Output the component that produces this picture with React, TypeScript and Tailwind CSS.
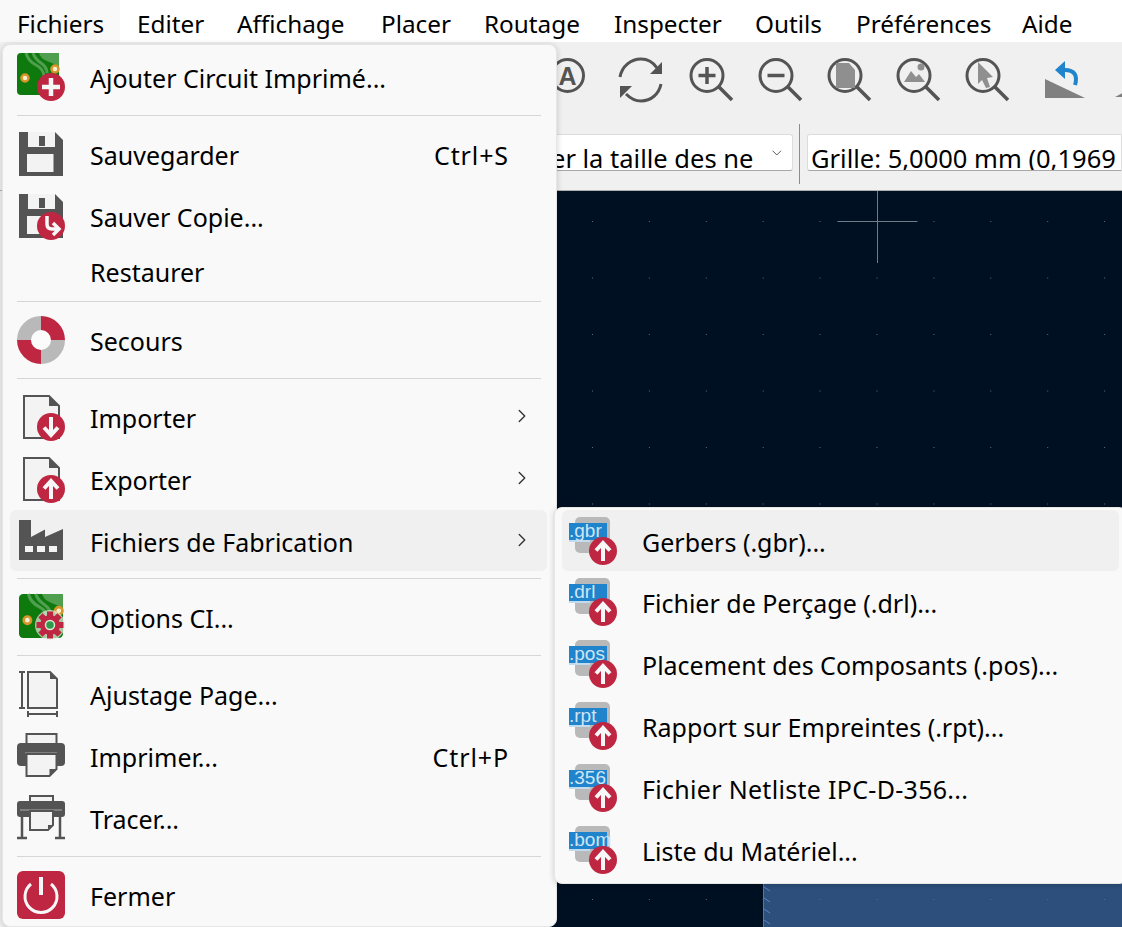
import { ChevronDown, ChevronRight } from 'lucide-react'
import type { ReactNode } from 'react'

const DARK = '#545454'
const RED = '#bf2641'
const PAPER = '#f3f3f3'

function Icon({ children }: { children: ReactNode }) {
  return (
    <svg viewBox="0 0 48 48" className="w-12 h-12 shrink-0">
      {children}
    </svg>
  )
}

function Badge({ kind }: { kind: 'plus' | 'up' | 'down' | 'copy' }) {
  return (
    <g>
      <circle cx="34" cy="34" r="14" fill={RED} />
      {kind === 'plus' && <path d="M25 34h18M34 25v18" stroke="#f7f7f7" strokeWidth="4.5" fill="none" />}
      {kind === 'up' && <path d="M34 44V27M27 33.500L34 26l7 7.500" stroke="#f7f7f7" strokeWidth="4" fill="none" />}
      {kind === 'down' && <path d="M34 24v17M27 34.500L34 42l7-7.500" stroke="#f7f7f7" strokeWidth="4" fill="none" />}
      {kind === 'copy' && <path d="M30 24v8q0 5 5 5h6M36 31l6 6-6 6" stroke="#f7f7f7" strokeWidth="3.500" fill="none" />}
    </g>
  )
}

function PcbBase({ x, y, s }: { x: number; y: number; s: number }) {
  const k = s / 42
  return (
    <g transform={`translate(${x} ${y}) scale(${k})`}>
      <rect width="42" height="42" rx="4" fill="#0e7a0e" />
      <path d="M22 0q1 5 8 8t12 5v-13z" fill="#4f9f4f" />
      <path d="M9 0q2 8 10 12t8 12v18M16 0q2 6 8 10t6 10" stroke="#4f9f4f" strokeWidth="3" fill="none" />
      <path d="M34 20q3 6 3 22" stroke="#4f9f4f" strokeWidth="3" fill="none" />
      <circle cx="8" cy="25" r="3.500" fill="#f4f0d0" stroke="#d9952b" strokeWidth="2.500" />
      <circle cx="38" cy="16" r="3.500" fill="#f4f0d0" stroke="#d9952b" strokeWidth="2.500" />
    </g>
  )
}

function Floppy() {
  return (
    <g>
      <path d="M2 2h36l8 8v36H2z" fill={DARK} />
      <path d="M11 2h27v15H11z" fill={PAPER} />
      <path d="M22 6h6v10h-6z" fill={DARK} />
      <path d="M10 24h26.500v18H10z" fill={PAPER} />
    </g>
  )
}

function DocFile({ kind }: { kind: 'up' | 'down' }) {
  return (
    <Icon>
      <path d="M7 3h25l10 10v32H7z" fill={PAPER} stroke={DARK} strokeWidth="2" />
      <path d="M32 3l10 10H32z" fill={DARK} />
      <Badge kind={kind} />
    </Icon>
  )
}

function GearBadge() {
  const angles = [0, 45, 90, 135, 180, 225, 270, 315]
  return (
    <g>
      <circle cx="33" cy="32" r="15" fill="#e6ece0" opacity="0.7" />
      {angles.map((a) => (
        <rect key={a} x="30" y="18.500" width="6" height="6" fill={RED} transform={`rotate(${a} 33 32)`} />
      ))}
      <circle cx="33" cy="32" r="10" fill={RED} />
      <circle cx="33" cy="32" r="4.500" fill="#2f9a4a" stroke="#dfe8d8" strokeWidth="1.500" />
    </g>
  )
}

const icons: Record<string, ReactNode> = {
  addBoard: (
    <Icon>
      <PcbBase x={0} y={0} s={42} />
      <Badge kind="plus" />
    </Icon>
  ),
  save: (
    <Icon>
      <Floppy />
    </Icon>
  ),
  saveCopy: (
    <Icon>
      <Floppy />
      <Badge kind="copy" />
    </Icon>
  ),
  rescue: (
    <Icon>
      <path d="M24 24V0A24 24 0 0 0 0 24z" fill="#b9b9b9" />
      <path d="M24 24V0a24 24 0 0 1 24 24z" fill={RED} />
      <path d="M24 24v24A24 24 0 0 1 0 24z" fill={RED} />
      <path d="M24 24v24a24 24 0 0 0 24-24z" fill="#b9b9b9" />
      <circle cx="24" cy="24" r="10" fill="#fbfbfb" />
    </Icon>
  ),
  importFile: <DocFile kind="down" />,
  exportFile: <DocFile kind="up" />,
  factory: (
    <Icon>
      <path d="M2 3h12v17l14-7.500V20l18-8v31H2z" fill={DARK} />
      <path d="M8 29h8v6H8zM20 29h8v6h-8zM32 29h8v6h-8z" fill={PAPER} />
    </Icon>
  ),
  boardOptions: (
    <Icon>
      <PcbBase x={2} y={1} s={44} />
      <GearBadge />
    </Icon>
  ),
  pageSetup: (
    <Icon>
      <path d="M11 2h22l7 7v29H11z" fill={PAPER} stroke={DARK} strokeWidth="2" />
      <path d="M33 2l7 7h-7z" fill={DARK} />
      <path d="M5 2v36M2 2h6M2 38h6M11 44h29M11 41v6M40 41v6" stroke={DARK} strokeWidth="2" fill="none" />
    </Icon>
  ),
  print: (
    <Icon>
      <path d="M9.500 2h30v12h-30z" fill={PAPER} stroke={DARK} strokeWidth="2" />
      <rect x="0" y="11" width="48" height="23" rx="4" fill={DARK} />
      <path d="M8 21h32" stroke="#8e8e8e" strokeWidth="1.500" />
      <path d="M9.500 22h30v15l-7 7h-23z" fill={PAPER} stroke={DARK} strokeWidth="2" />
      <path d="M39.500 37l-7 7v-7z" fill={DARK} />
    </Icon>
  ),
  plot: (
    <Icon>
      <path d="M13 2h23v8H13z" fill={PAPER} stroke={DARK} strokeWidth="2" />
      <path d="M5 20v23M43 20v23M0 44h10M38 44h10" stroke={DARK} strokeWidth="2.500" fill="none" />
      <rect x="0" y="7" width="48" height="16" rx="3" fill={DARK} />
      <path d="M3 16h42" stroke="#8e8e8e" strokeWidth="1.500" />
      <path d="M13 17h23v14l-5 5H13z" fill={PAPER} stroke={DARK} strokeWidth="2" />
      <path d="M36 31l-5 5v-5z" fill={DARK} />
    </Icon>
  ),
  quit: (
    <Icon>
      <rect width="48" height="48" rx="6" fill={RED} />
      <path d="M14 13a16 16 0 1 0 20 0" stroke="#f7f7f7" strokeWidth="3" fill="none" />
      <path d="M24 6v18" stroke="#f7f7f7" strokeWidth="4" />
    </Icon>
  ),
}

type MenuRow =
  | { sep: true }
  | { label: string; icon?: string; shortcut?: string; arrow?: boolean; active?: boolean; short?: boolean }

const mainRows: MenuRow[] = [
  { icon: 'addBoard', label: 'Ajouter Circuit Imprimé...' },
  { sep: true },
  { icon: 'save', label: 'Sauvegarder', shortcut: 'Ctrl+S' },
  { icon: 'saveCopy', label: 'Sauver Copie...' },
  { label: 'Restaurer', short: true },
  { sep: true },
  { icon: 'rescue', label: 'Secours' },
  { sep: true },
  { icon: 'importFile', label: 'Importer', arrow: true },
  { icon: 'exportFile', label: 'Exporter', arrow: true },
  { icon: 'factory', label: 'Fichiers de Fabrication', arrow: true, active: true },
  { sep: true },
  { icon: 'boardOptions', label: 'Options CI...' },
  { sep: true },
  { icon: 'pageSetup', label: 'Ajustage Page...' },
  { icon: 'print', label: 'Imprimer...', shortcut: 'Ctrl+P' },
  { icon: 'plot', label: 'Tracer...' },
  { sep: true },
  { icon: 'quit', label: 'Fermer' },
]

const fabRows = [
  { ext: '.gbr', label: 'Gerbers (.gbr)...', active: true },
  { ext: '.drl', label: 'Fichier de Perçage (.drl)...' },
  { ext: '.pos', label: 'Placement des Composants (.pos)...' },
  { ext: '.rpt', label: 'Rapport sur Empreintes (.rpt)...' },
  { ext: '.356', label: 'Fichier Netliste IPC-D-356...', wide: true },
  { ext: '.bom', label: 'Liste du Matériel...' },
]

const menuBar = [
  { label: 'Fichiers', w: 'w-[120px] bg-[#f9f9f9]' },
  { label: 'Editer', w: 'w-[100px]' },
  { label: 'Affichage', w: 'w-[144px]' },
  { label: 'Placer', w: 'w-[103px]' },
  { label: 'Routage', w: 'w-[130px]' },
  { label: 'Inspecter', w: 'w-[141px]' },
  { label: 'Outils', w: 'w-[101px]' },
  { label: 'Préférences', w: 'w-[166px]' },
  { label: 'Aide', w: 'w-[100px]' },
]

function FabIcon({ ext }: { ext: string }) {
  return (
    <Icon>
      <rect x="6" y="0" width="35" height="36" rx="5" fill="#b9b9b9" />
      <path d="M0 6h38v17H0z" fill="#1f84cb" />
      <path d="M0 23h21v2H0z" fill="#c3dbee" />
      <text x="0" y="20" fontSize="19" fill="#cfe4f4" fontFamily="'Liberation Sans', sans-serif">
        {ext}
      </text>
      <Badge kind="up" />
    </Icon>
  )
}

function Magnifier({ children }: { children: ReactNode }) {
  return (
    <svg viewBox="0 0 48 48" className="w-12 h-12 shrink-0">
      <circle cx="19" cy="19.500" r="16" fill="none" stroke={DARK} strokeWidth="3" />
      <path d="M31 31l13 13" stroke={DARK} strokeWidth="3.500" />
      {children}
    </svg>
  )
}

function Toolbar() {
  return (
    <div className="flex items-center h-[76px] pl-[549px]">
      <svg viewBox="0 0 36 48" className="w-9 h-12 shrink-0">
        <circle cx="18.500" cy="19.500" r="16" fill="none" stroke={DARK} strokeWidth="3" />
        <text x="18.500" y="28.500" textAnchor="middle" fontSize="25" fontWeight="700" fill={DARK} fontFamily="'Liberation Sans', sans-serif">
          A
        </text>
      </svg>
      <div className="w-px h-[60px] bg-[#8c8c8c] ml-[18px]" />
      <svg viewBox="0 0 48 48" className="w-12 h-12 shrink-0 ml-[14px]">
        <path d="M3 21C5 10 14 3 24 3c7 0 12 3 16 9" fill="none" stroke={DARK} strokeWidth="3" />
        <path d="M45 6v12H33z" fill={DARK} />
        <path d="M44 28c-2 10-10 17-20 17-6 0-11-3-15-7" fill="none" stroke={DARK} strokeWidth="3" />
        <path d="M3 30h12L3 42z" fill={DARK} />
      </svg>
      <div className="flex ml-[23px] gap-[21px]">
        <Magnifier>
          <path d="M19 11v17M10.500 19.500h17" stroke={DARK} strokeWidth="3.500" />
        </Magnifier>
        <Magnifier>
          <path d="M10.500 19.500h17" stroke={DARK} strokeWidth="3.500" />
        </Magnifier>
        <Magnifier>
          <path d="M10 7h13l6 7v18H10z" fill="#8f8f8f" />
        </Magnifier>
        <Magnifier>
          <path d="M9 26l7-11 5 6 3-3 6 8z" fill="#8f8f8f" />
          <circle cx="26" cy="11" r="3.500" fill="#8f8f8f" />
        </Magnifier>
        <Magnifier>
          <path d="M14 6l15 15-6 1 3 9-4 1-4-8-4 4z" fill="#8f8f8f" />
        </Magnifier>
      </div>
      <div className="w-px h-[60px] bg-[#8c8c8c] ml-[15px]" />
      <svg viewBox="0 0 48 48" className="w-12 h-12 shrink-0 ml-[15px]">
        <path d="M3 23l40 19H3z" fill="#808080" />
        <path d="M33 29c3-10-1-15-10-15" fill="none" stroke="#1f84cb" strokeWidth="4" />
        <path d="M23 5L13 14l10 9z" fill="#1f84cb" />
      </svg>
      <svg viewBox="0 0 48 48" className="w-12 h-12 shrink-0 ml-[25px]">
        <path d="M0 41h40V20z" fill="#808080" />
      </svg>
    </div>
  )
}

function FieldsRow() {
  return (
    <div className="flex items-center h-[72px] pl-[550px] text-[25.5px] leading-[26px] text-black">
      <div className="flex items-center justify-end w-[243px] h-[37px] -mt-[3px] pr-[7px] bg-white border border-[#dcdcdc] border-b-[#a8a8a8] rounded-[3px] overflow-hidden">
        <span className="whitespace-nowrap mr-[16px] translate-y-[5px]">er la taille des ne</span>
        <ChevronDown size={20} strokeWidth={1.5} className="text-[#555555]" />
      </div>
      <div className="w-px h-[60px] bg-[#8c8c8c] ml-[6px]" />
      <div className="flex items-center ml-[7px] flex-1 min-w-0 h-[37px] -mt-[3px] pl-[3px] bg-white border border-[#dcdcdc] border-b-[#a8a8a8] rounded-l-[3px] overflow-hidden">
        <span className="whitespace-nowrap translate-y-[5px]">Grille: 5,0000 mm (0,1969</span>
      </div>
    </div>
  )
}

function Canvas() {
  return (
    <div className="relative flex-1 bg-[#001023] border-t border-[#b0b0b0] overflow-hidden">
      <div className="absolute left-[763px] right-0 bottom-0 h-[120px] bg-[#2c4f7c] border-l border-[#4a78bb]" />
      <svg className="absolute inset-0 w-full h-full">
        <defs>
          <pattern id="grid" x="592" y="30" width="56.900" height="56.500" patternUnits="userSpaceOnUse">
            <rect width="1" height="1" fill="#5d6c7c" />
          </pattern>
        </defs>
        <rect width="1122" height="737" fill="url(#grid)" />
        <path d="M837.500 30.500h80M877.500 0v72" stroke="#6f7b86" strokeWidth="1" />
        <path d="M764 696l6 4M764 707l6 4M764 718l6 4M764 729l6 4" stroke="#5585cc" strokeWidth="1" />
      </svg>
      <div className="absolute left-0 top-0 bottom-0 w-[60px] bg-[#f0f0f0]" />
    </div>
  )
}

function MainMenu() {
  return (
    <div className="absolute left-[2px] top-[44px] w-[555px] pt-px pl-[7px] pr-[9px] bg-[#f9f9f9] rounded-lg border border-[#e6e6e6] shadow-[0_1px_6px_rgba(0,0,0,0.18)]">
      {mainRows.map((row, i) => {
        if ('sep' in row) {
          return <div key={i} className="h-px bg-[#d6d6d6] my-[7px] ml-[7px] mr-[6px]" />
        }
        const height = row.short ? 'h-[47px]' : row.active ? 'h-[61px]' : 'h-[62px]'
        return (
          <div key={i} className={`flex items-center pl-[7px] rounded-md ${height} ${row.active ? 'bg-[#f0f0f0]' : ''}`}>
            <div className="w-12 h-12 shrink-0">{row.icon ? icons[row.icon] : null}</div>
            <span className="ml-[25px] flex-1 whitespace-nowrap translate-y-[2px]">{row.label}</span>
            {row.shortcut && <span className="mr-[38px] tracking-[0.9px] translate-y-[2px]">{row.shortcut}</span>}
            {row.arrow && <ChevronRight size={22} strokeWidth={1.5} className="text-[#333333] mr-[14px] -translate-y-[1px]" />}
          </div>
        )
      })}
    </div>
  )
}

function FabMenu() {
  return (
    <div className="absolute left-[554px] top-[507px] w-[573px] pt-[2px] pb-[2px] px-[7px] bg-[#f9f9f9] rounded-lg border border-[#e6e6e6] shadow-[0_1px_6px_rgba(0,0,0,0.18)]">
      {fabRows.map((row) => (
        <div key={row.ext} className={`flex items-center pl-[7px] rounded-md ${row.active ? 'h-[61px] bg-[#f0f0f0]' : 'h-[62px]'}`}>
          <FabIcon ext={row.ext} />
          <span className={`ml-[25px] whitespace-nowrap translate-y-[2px] ${row.wide ? 'tracking-[0.3px]' : ''}`}>{row.label}</span>
        </div>
      ))}
    </div>
  )
}

export default function App() {
  return (
    <div className="relative flex flex-col w-[1122px] h-[927px] overflow-hidden bg-[#f0f0f0] text-[25px] text-black font-['Noto_Sans',sans-serif]">
      <div className="flex h-[42px] bg-white shrink-0 text-[24.3px]">
        {menuBar.map((m) => (
          <div key={m.label} className={`flex items-center pl-[17px] h-full shrink-0 ${m.w}`}>
            <span className="translate-y-[3px] whitespace-nowrap">{m.label}</span>
          </div>
        ))}
      </div>
      <Toolbar />
      <FieldsRow />
      <Canvas />
      <MainMenu />
      <FabMenu />
    </div>
  )
}
